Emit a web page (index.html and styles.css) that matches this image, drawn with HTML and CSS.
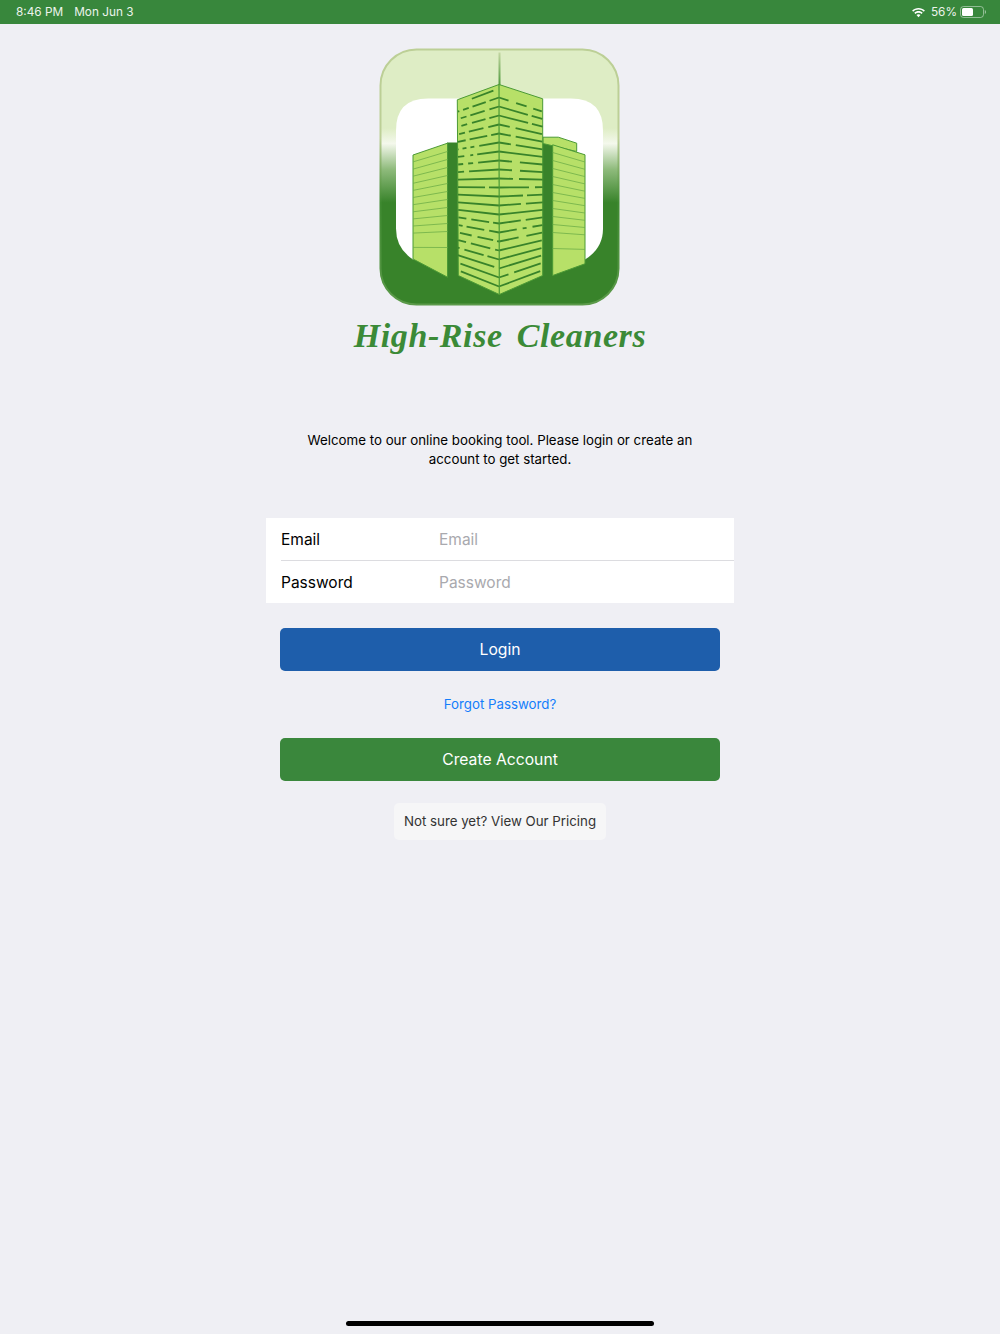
FILE: index.html
```html
<!DOCTYPE html>
<html>
<head>
    <meta charset="utf-8" />
    <title>High-Rise Cleaners</title>
    <link rel="stylesheet" href="styles.css">
</head>
<body>
<!-- Status bar -->
<section id="statusbar">
    <div class="status-left">
        <span>8:46 PM</span>
        <span>Mon Jun 3</span>
    </div>
    <div class="status-right">
        <svg class="wifi" width="15" height="11" viewBox="0 0 15 11">
            <path d="M7.5 2.6c2 0 3.900.8 5.300 2.100l1.100-1.200C12.200 1.900 9.900.9 7.500.9S2.800 1.900 1.100 3.500l1.100 1.200C3.600 3.400 5.500 2.600 7.500 2.600z" />
            <path d="M7.500 5.700c1.200 0 2.300.4 3.100 1.200l1.100-1.200C10.600 4.700 9.100 4.100 7.500 4.100s-3.100.6-4.200 1.600l1.100 1.200c.8-.8 1.900-1.200 3.100-1.200z" />
            <path d="M7.500 7.300c-.8 0-1.500.3-2 .8l2 2.200 2-2.200c-.5-.5-1.200-.8-2-.8z" />
        </svg>
        <span>56%</span>
        <svg class="battery" width="26" height="12" viewBox="0 0 26 12">
            <rect x="0.500" y="0.500" width="23" height="11" rx="3" class="battery-case" />
            <rect x="2" y="2" width="11" height="8" rx="1.500" class="battery-level" />
            <path d="M24.800 4v4c.7-.3 1.200-1.100 1.200-2s-.5-1.700-1.200-2z" class="battery-tip" />
        </svg>
    </div>
</section>

<section id="content">
    <!-- Logo -->
    <svg class="logo" width="242" height="258" viewBox="379 47.500 242 258">
        <defs>
            <linearGradient id="tileFill" gradientUnits="userSpaceOnUse" x1="0" y1="48" x2="0" y2="305">
                <stop offset="0.310" stop-color="#deedc5" />
                <stop offset="0.370" stop-color="#f4f8ec" />
                <stop offset="0.470" stop-color="#8fbb7c" />
                <stop offset="0.600" stop-color="#38832a" />
            </linearGradient>
            <linearGradient id="tileEdge" gradientUnits="userSpaceOnUse" x1="0" y1="48" x2="0" y2="305">
                <stop offset="0.350" stop-color="#bccf96" />
                <stop offset="0.600" stop-color="#3f8a31" />
                <stop offset="1" stop-color="#5c9a4a" />
            </linearGradient>
            <linearGradient id="mast" gradientUnits="userSpaceOnUse" x1="0" y1="52" x2="0" y2="84">
                <stop offset="0" stop-color="#c3d6a2" />
                <stop offset="1" stop-color="#4f9a3d" />
            </linearGradient>
        </defs>

        <rect x="380.500" y="49" width="238" height="255" rx="36" fill="url(#tileFill)" stroke="url(#tileEdge)" stroke-width="2" />
        <path d="M396 130Q396 98 428 98L571 98Q603 98 603 130L603 228Q603 248 585 259L413 259Q396 248 396 228Z" fill="#fff" />
        <rect x="498.500" y="52" width="2" height="33" fill="url(#mast)" />

        <!-- Dark gaps between the towers -->
        <rect x="447" y="142" width="12" height="134" fill="#38832a" />
        <rect x="542" y="143" width="11" height="133" fill="#38832a" />

        <!-- Back right tower -->
        <path class="face" d="M543 136.700L558.300 136.700L576.700 142.700L576.700 151L543 143Z" />

        <!-- Left tower -->
        <path class="face" d="M413 154.500L447.500 142.700L447.500 276.700L413 258.500Z" />
        <g class="thin">
            <path d="M447.500 151L413 161.400" />
            <path d="M447.500 159L413 168.600" />
            <path d="M447.500 167L413 175.700" />
            <path d="M447.500 175L413 182.800" />
            <path d="M447.500 183L413 189.900" />
            <path d="M447.500 191L413 197" />
            <path d="M447.500 199L413 204.200" />
            <path d="M447.500 207L413 211.300" />
            <path d="M447.500 215L413 218.400" />
            <path d="M447.500 223L413 225.500" />
            <path d="M447.500 231L413 232.600" />
            <path d="M447.500 247L413 246.900" />
        </g>

        <!-- Right tower -->
        <path class="face" d="M552.700 144.300L585 154.300L585 263.300L552.700 275Z" />
        <g class="thin">
            <path d="M552.700 152L585 161.500" />
            <path d="M552.700 160L585 168.800" />
            <path d="M552.700 168L585 176.100" />
            <path d="M552.700 176L585 183.400" />
            <path d="M552.700 184L585 190.700" />
            <path d="M552.700 192L585 197.900" />
            <path d="M552.700 200L585 205.200" />
            <path d="M552.700 208L585 212.500" />
            <path d="M552.700 216L585 219.800" />
            <path d="M552.700 224L585 227" />
            <path d="M552.700 232L585 234.300" />
            <path d="M552.700 248L585 248.900" />
        </g>

        <!-- Centre tower -->
        <path class="face" d="M457.300 99.300L499 84L542.700 98.300L542.700 275L499.300 294L458.300 275Z" />
        <g class="dashes">
            <path d="M499 88L458 103.500" stroke-dasharray="0 6 23 30" />
            <path d="M499 97L458 111.100" stroke-dasharray="10 4 14 4 6 4" />
            <path d="M499 106L458 118.600" stroke-dasharray="10 5 15 4 6 4" />
            <path d="M499 115L458 126.200" stroke-dasharray="10 4 14 5 6 4" />
            <path d="M499 124L458 133.800" stroke-dasharray="11 5 15 4 6 4" />
            <path d="M499 133L458 141.300" stroke-dasharray="8 4 18 4 8" />
            <path d="M499 142L458 148.900" stroke-dasharray="20 5 4 4 4 4 5" />
            <path d="M499 151L458 156.400" stroke-dasharray="22 4 3 6 7" />
            <path d="M499 160L458 164" stroke-dasharray="21 5 5 5 5" />
            <path d="M499 169L458 171.600" stroke-dasharray="30 5 6" />
            <path d="M499 178L458 179.100" stroke-dasharray="41" />
            <path d="M499 187L458 186.700" stroke-dasharray="10 4 27" />
            <path d="M499 196L458 194.200" stroke-dasharray="41" />
            <path d="M499 205L458 201.800" stroke-dasharray="41" />
            <path d="M499 214L458 209.400" stroke-dasharray="41" />
            <path d="M499 223L458 216.900" stroke-dasharray="6 4 18 5 8" />
            <path d="M499 232L458 224.500" stroke-dasharray="10 5 18 4 4" />
            <path d="M499 241L458 232" stroke-dasharray="2 4 16 6 12" />
            <path d="M499 250L458 239.600" stroke-dasharray="4 5 20 5 8" />
            <path d="M499 259L458 247.200" stroke-dasharray="12 4 20 5 4" />
            <path d="M499 268L458 254.700" stroke-dasharray="0 5 36" />
            <path d="M499 277L458 262.300" stroke-dasharray="41" />
            <path d="M499 286L458 269.800" stroke-dasharray="41" />

            <path d="M499 97L542.700 111.100" stroke-dasharray="10 8 11 7 9" />
            <path d="M499 106L542.700 118.600" stroke-dasharray="30 4 11" />
            <path d="M499 115L542.700 126.200" stroke-dasharray="30 4 11" />
            <path d="M499 124L542.700 133.800" stroke-dasharray="11 6 27" />
            <path d="M499 133L542.700 141.300" stroke-dasharray="12 5 27" />
            <path d="M499 142L542.700 148.900" stroke-dasharray="12 5 27" />
            <path d="M499 151L542.700 156.400" stroke-dasharray="44" />
            <path d="M499 160L542.700 164" stroke-dasharray="13 8 23" />
            <path d="M499 169L542.700 171.600" stroke-dasharray="13 8 23" />
            <path d="M499 178L542.700 179.100" stroke-dasharray="14 6 24" />
            <path d="M499 187L542.700 186.700" stroke-dasharray="30 6 8" />
            <path d="M499 196L542.700 194.200" stroke-dasharray="24 4 16" />
            <path d="M499 205L542.700 201.800" stroke-dasharray="22 5 17" />
            <path d="M499 214L542.700 209.400" stroke-dasharray="44" />
            <path d="M499 223L542.700 216.900" stroke-dasharray="22 5 17" />
            <path d="M499 232L542.700 224.500" stroke-dasharray="18 6 4 6 10" />
            <path d="M499 241L542.700 232" stroke-dasharray="20 8 16" />
            <path d="M499 250L542.700 239.600" stroke-dasharray="44" />
            <path d="M499 259L542.700 247.200" stroke-dasharray="44" />
            <path d="M499 268L542.700 254.700" stroke-dasharray="44" />
            <path d="M499 277L542.700 262.300" stroke-dasharray="10 6 28" />
            <path d="M499 286L542.700 269.800" stroke-dasharray="44" />
        </g>
        <path class="edge" d="M499 84L499.300 294" />
    </svg>
    <div class="brand">High-Rise Cleaners</div>

    <p class="welcome">Welcome to our online booking tool. Please login or create an account to get started.</p>

    <!-- Login form -->
    <form class="login-form">
        <div class="field-group">
            <div class="field">
                <label for="email">Email</label>
                <input id="email" name="email" type="text" placeholder="Email" />
            </div>
            <div class="field">
                <label for="password">Password</label>
                <input id="password" name="password" type="password" placeholder="Password" />
            </div>
        </div>
        <div class="actions">
            <button type="button" class="btn btn-blue">Login</button>
            <a href="#" class="forgot">Forgot Password?</a>
            <button type="button" class="btn btn-green">Create Account</button>
            <button type="button" class="btn-pricing">Not sure yet? View Our Pricing</button>
        </div>
    </form>

    <div class="home-bar"></div>
</section>
</body>
</html>
```

FILE: styles.css
```css
html, body {
    margin: 0;
    height: 100%;
}
body {
    background-color: #efeff4;
    color: #000;
    display: flex;
    flex-direction: column;
    font-family: Inter, "Liberation Sans", sans-serif;
}

#statusbar {
    align-items: center;
    background-color: #38873c;
    box-sizing: border-box;
    color: #fff;
    display: flex;
    flex: none;
    font-size: 11.800px;
    height: 24px;
    justify-content: space-between;
    padding: 0 14px 0 16px;
}
#statusbar span {
    opacity: 0.9;
}
.status-left {
    display: flex;
    gap: 11px;
}
.status-right {
    align-items: center;
    display: flex;
}
.wifi {
    fill: #fff;
    margin-right: 5px;
}
.battery {
    margin-left: 3px;
}
.battery-case {
    fill: none;
    opacity: 0.45;
    stroke: #fff;
}
.battery-level {
    fill: #fff;
}
.battery-tip {
    fill: #fff;
    opacity: 0.5;
}

#content {
    align-items: center;
    display: flex;
    flex: 1;
    flex-direction: column;
    padding-top: 23.5px;
}

.logo {
    display: block;
}
.face {
    fill: #b7e068;
    stroke: #4b9a35;
    stroke-width: 1;
}
.edge {
    fill: none;
    stroke: #4b9a35;
    stroke-width: 1.200;
}
.thin path {
    fill: none;
    stroke: #6fae48;
    stroke-width: 0.800;
}
.dashes path {
    fill: none;
    stroke: #38832a;
    stroke-width: 1.800;
}
.brand {
    color: #3b8a37;
    font-family: "Liberation Serif", serif;
    font-size: 34px;
    font-style: italic;
    font-weight: bold;
    height: 41px;
    letter-spacing: 0.600px;
    line-height: 41px;
    margin-top: 9px;
    word-spacing: 5px;
}

.welcome {
    font-size: 13.300px;
    line-height: 19px;
    margin: 75px 0 0;
    text-align: center;
    width: 400px;
}

.login-form {
    margin-top: 49px;
    width: 468px;
}
.field-group {
    background-color: #fff;
    padding-left: 15px;
}
.field {
    align-items: center;
    display: flex;
    height: 42.500px;
}
.field:first-child {
    box-sizing: border-box;
    padding-top: 1px;
}
.field + .field {
    border-top: 1px solid #dcdce0;
    height: 42px;
}
.field label {
    font-size: 15.500px;
    width: 158px;
}
.field input {
    background: none;
    border: 0;
    flex: 1;
    font-family: inherit;
    font-size: 15.500px;
    outline: 0;
    padding: 0;
}
.field input::placeholder {
    color: #a9a9ae;
    opacity: 1;
}

.actions {
    align-items: center;
    display: flex;
    flex-direction: column;
    padding: 25px 14px 0;
}
.btn {
    border: 0;
    border-radius: 5px;
    color: #fff;
    font-family: inherit;
    font-size: 15.700px;
    height: 43px;
    padding: 0;
    width: 100%;
}
.btn-blue {
    background-color: #1e5eab;
}
.btn-green {
    background-color: #3a873c;
}
.forgot {
    color: #147efb;
    font-size: 13.300px;
    line-height: 19px;
    margin: 24px 0;
    text-decoration: none;
}
.btn-pricing {
    background-color: #f6f6f7;
    border: 0;
    border-radius: 5px;
    color: #333;
    font-family: inherit;
    font-size: 13.300px;
    height: 37px;
    margin-top: 22px;
    padding: 0 0 2px;
    white-space: nowrap;
    width: 212px;
}

.home-bar {
    background-color: #000;
    border-radius: 3px;
    flex: none;
    height: 5px;
    margin-bottom: 8px;
    margin-top: auto;
    width: 308px;
}
```
